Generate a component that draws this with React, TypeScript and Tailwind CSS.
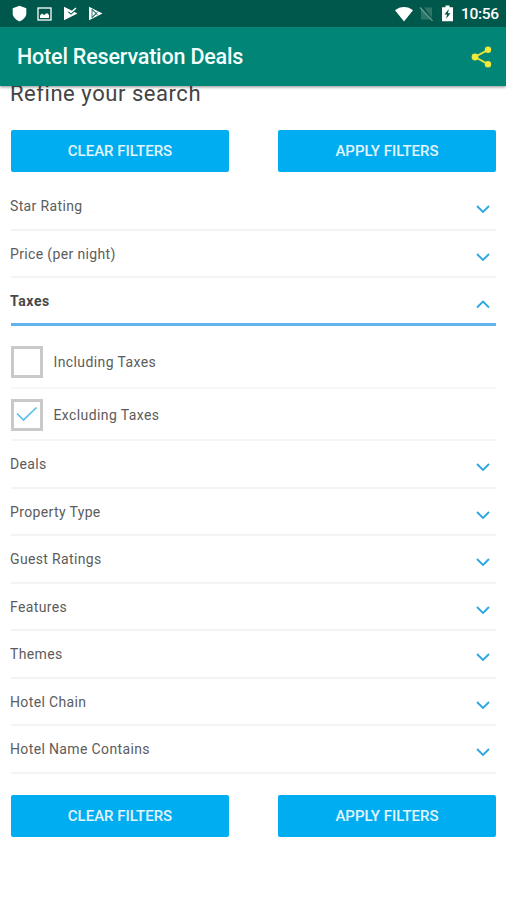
import React from "react";

function StatusBar() {
  return (
    <div className="flex h-[27px] items-center bg-[#00574b] pl-[12px] pr-[8px] text-white">
      <svg width="15" height="17" viewBox="0 0 15 17" fill="currentColor">
        <path d="M7.500 .8 14.300 3.300v5.200c0 3.200-2.800 6.200-6.800 8C3.500 14.700.7 11.700.7 8.500V3.300z" />
      </svg>
      <svg className="ml-[10px]" width="15" height="14" viewBox="0 0 15 14">
        <rect x="1" y="1" width="13" height="12" fill="none" stroke="currentColor" strokeWidth="1.300" />
        <path d="M3 11V8.500l2-2 2 1.500 3-2 2 2v3z" fill="currentColor" />
      </svg>
      <svg className="ml-[11px]" width="15" height="15" viewBox="0 0 15 15">
        <path d="M1 .8 14.500 7.500 1 14.200z" fill="currentColor" />
        <path d="M5.500 5.800 8 8l5.500-5" fill="none" stroke="#00574b" strokeWidth="1.200" />
        <path d="M6 4.500 8 6.500 13 2" fill="none" stroke="currentColor" strokeWidth="1.600" />
      </svg>
      <svg className="ml-[10px]" width="15" height="15" viewBox="0 0 15 15">
        <path d="M1 .8 14.500 7.500 1 14.200z" fill="currentColor" />
        <path d="M4 3.500v8L8.500 7.500zM4 3.500 10 9.500M4 11.500 10 5.500" fill="none" stroke="#00574b" strokeWidth=".8" />
      </svg>
      <div className="flex-1" />
      <svg width="20" height="16" viewBox="0 0 20 16" fill="currentColor">
        <path d="M1 4.300C6-.2 14-.2 19 4.300L10 15.500z" />
      </svg>
      <svg className="ml-[5px]" width="15" height="16" viewBox="0 0 15 16">
        <path d="M2 2.500 12.500 13.500H2zM5 1.500H13V12z" fill="#2f7469" />
        <path d="M1 1.500 13.500 14.800" stroke="#6fa098" strokeWidth="1.200" />
      </svg>
      <svg className="ml-[8px]" width="11" height="17" viewBox="0 0 11 17">
        <path d="M3.500.5h4v1.700H11v14H0v-14h3.500z" fill="currentColor" />
        <path d="M6.800 4 2.500 9.500H5l-.8 4.300L8.500 8.200H6z" fill="#00574b" />
      </svg>
      <span className="ml-[8px] w-[37px] whitespace-nowrap text-[15.500px] font-medium leading-[20px] tracking-[-0.300px]">10:56</span>
    </div>
  );
}

function Header() {
  return (
    <header className="relative z-10 bg-[#008577] shadow-[0_1px_3px_rgba(0,0,0,0.450)]">
      <StatusBar />
      <div className="flex h-[59px] items-center justify-between pl-[17px] pr-[14px]">
        <h1 className="pt-px text-[21.500px] font-medium leading-[28px] tracking-[-0.180px] text-[#f5fffd]">Hotel Reservation Deals</h1>
        <svg width="21" height="22" viewBox="0 0 21 22" fill="#f0e83a">
          <path d="M17 3.800 4 11l13 7.200" fill="none" stroke="#e3e03c" strokeWidth="2" />
          <circle cx="17" cy="3.800" r="3.200" />
          <circle cx="4" cy="11" r="3.400" />
          <circle cx="17" cy="18.200" r="3.200" />
        </svg>
      </div>
    </header>
  );
}

function FilterButtons() {
  const style =
    "h-[42px] w-[218px] rounded-[2px] bg-[#00adf0] text-[15px] font-medium leading-[42px] text-[#e3f5fd]";
  return (
    <div className="flex justify-between">
      <button className={style}>CLEAR FILTERS</button>
      <button className={style}>APPLY FILTERS</button>
    </div>
  );
}

function Section({ label, open = false }: { label: string; open?: boolean }) {
  return (
    <div
      className={
        open
          ? "flex h-[47.500px] justify-between border-b-3 border-[#62b2ee] font-bold tracking-[0.600px] text-[#484848]"
          : "flex h-[47.500px] justify-between border-b-2 border-[#f4f4f4] tracking-[0.360px] text-[#5c5c5c]"
      }
    >
      <span className="-ml-px pt-[13px] text-[14px] leading-[20px]">{label}</span>
      <svg className="mr-[6px] mt-[21px]" width="14" height="10" viewBox="0 0 14 10" fill="none" stroke="#2ba6e0" strokeWidth="1.800">
        <path d={open ? "M1 8.500 7 2.500l6 6" : "M1 2l6 6 6-6"} />
      </svg>
    </div>
  );
}

function Option({ label, checked = false }: { label: string; checked?: boolean }) {
  return (
    <div className="flex h-[52.500px] items-center border-b-2 border-[#f6f6f6] pt-[2px] text-[#5c5c5c]">
      <span className="flex h-[32px] w-[32px] items-center justify-center border-[3px] border-[#c9c9c9]">
        {checked && (
          <svg className="-mt-[2px]" width="22" height="16" viewBox="0 0 22 16" fill="none" stroke="#5bbdec" strokeWidth="1.700">
            <path d="M1 7.500 7.500 14 20.500 1.500" />
          </svg>
        )}
      </span>
      <span className="ml-[10.500px] text-[14px] leading-[20px] tracking-[0.400px]">{label}</span>
    </div>
  );
}

const sections = ["Deals", "Property Type", "Guest Ratings", "Features", "Themes", "Hotel Chain", "Hotel Name Contains"];

export default function App() {
  return (
    <div className="h-[900px] w-[506px] overflow-hidden bg-white font-['Roboto',sans-serif]">
      <Header />
      <main className="pl-[11px] pr-[10px]">
        <h2 className="-mt-[7px] -ml-px h-[51px] text-[22px] leading-[30px] tracking-[0.550px] text-[#444]">Refine your search</h2>
        <FilterButtons />
        <div className="mt-[11px]">
          <Section label="Star Rating" />
          <Section label="Price (per night)" />
          <Section label="Taxes" open />
          <div className="pt-[10.500px]">
            <Option label="Including Taxes" />
            <Option label="Excluding Taxes" checked />
          </div>
          {sections.map((label) => (
            <Section key={label} label={label} />
          ))}
        </div>
        <div className="mt-[21px]">
          <FilterButtons />
        </div>
      </main>
    </div>
  );
}
